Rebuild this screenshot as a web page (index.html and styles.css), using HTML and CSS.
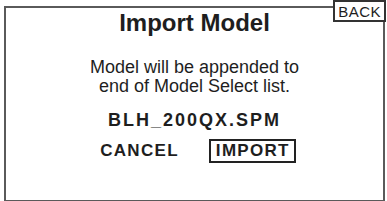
FILE: index.html
```html
<!DOCTYPE html>
<html lang="en">
<head>
    <meta charset="UTF-8">
    <title>Import Model</title>
    <link rel="stylesheet" href="styles.css">
</head>
<body>
    <div class="screen">
        <span class="back">BACK</span>
        <h1 class="title">Import Model</h1>
        <p class="message">Model will be appended to<br>end of Model Select list.</p>
        <div class="filename">BLH_200QX.SPM</div>
        <div class="actions">
            <span class="action">CANCEL</span>
            <span class="action selected">IMPORT</span>
        </div>
    </div>
</body>
</html>
```

FILE: styles.css
```css
body {
    margin: 0;
    background-color: #fff;
    font-family: "Liberation Sans", Arial, sans-serif;
    color: #1e1e1e;
    overflow: hidden;
}
.screen {
    position: relative;
    box-sizing: border-box;
    margin: 6px 2px 0 4px;
    height: 196px;
    border: 2px solid #5a5a5a;
    display: flex;
    flex-direction: column;
    align-items: center;
}
.back {
    position: absolute;
    top: -8px;
    right: -3px;
    padding: 1px 3px 0;
    border: 2px solid #333;
    background-color: #fff;
    font-size: 15px;
    letter-spacing: 0.5px;
    line-height: 17px;
}
.title {
    margin: 1px 0 0;
    font-size: 24px;
    line-height: 28px;
    font-weight: bold;
}
.message {
    margin: 21px 0 0;
    font-size: 18px;
    line-height: 19px;
    text-align: center;
}
.filename {
    margin-top: 14px;
    font-size: 18px;
    line-height: 20px;
    font-weight: bold;
    letter-spacing: 2px;
}
.actions {
    margin-top: 9px;
    display: flex;
    gap: 24px;
    align-items: center;
}
.action {
    font-size: 17px;
    line-height: 18px;
    font-weight: bold;
    letter-spacing: 1.3px;
    padding: 1px 4px 1px 5px;
    border: 2px solid transparent;
}
.action.selected {
    border-color: #222;
}
```
